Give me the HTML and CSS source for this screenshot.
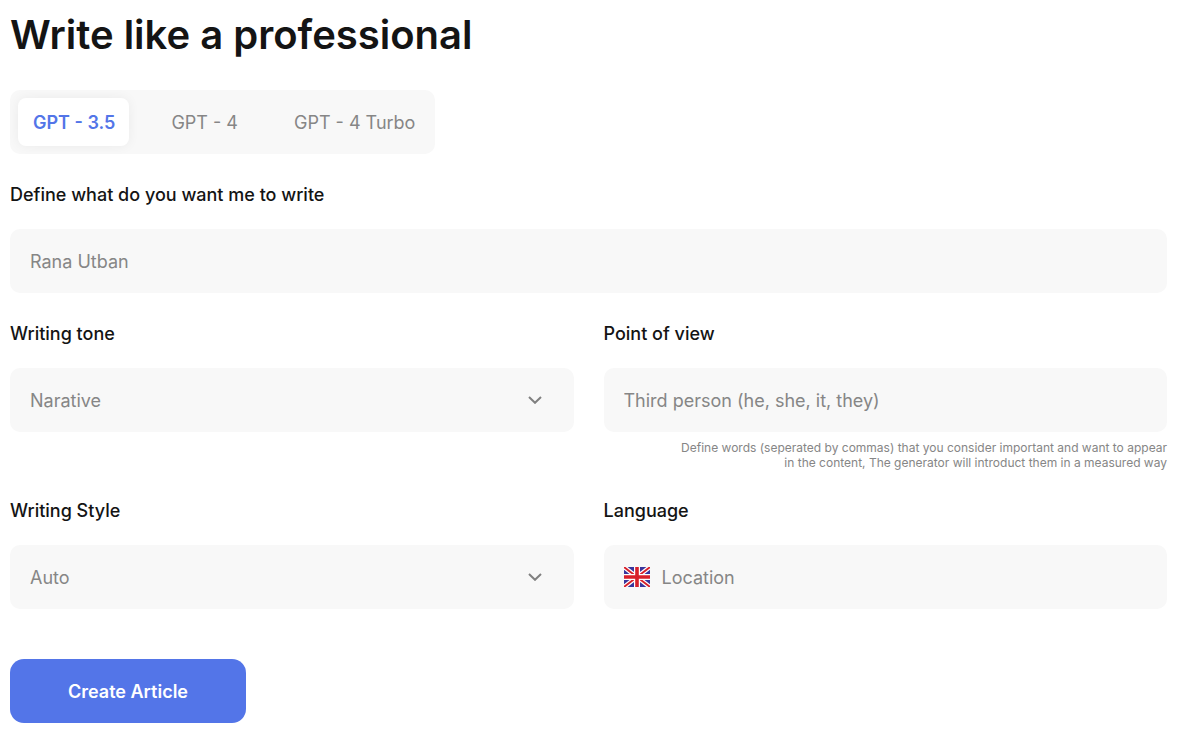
FILE: index.html
```html
<!DOCTYPE html>
<html lang="en">
<head>
<meta charset="utf-8">
<meta name="viewport" content="width=device-width, initial-scale=1">
<title>Write like a professional</title>
<link rel="stylesheet" href="styles.css">
</head>
<body>
<main class="page">
  <h1 class="title">Write like a professional</h1>
  <div class="tabs" role="tablist">
    <button class="tab tab-active" type="button" role="tab" aria-selected="true">GPT - 3.5</button>
    <button class="tab" type="button" role="tab" aria-selected="false">GPT - 4</button>
    <button class="tab" type="button" role="tab" aria-selected="false">GPT - 4 Turbo</button>
  </div>
  <form class="form">
    <div class="field field-wide">
      <label class="label" for="topic">Define what do you want me to write</label>
      <div class="control"><input class="input" id="topic" type="text" placeholder="Rana Utban"></div>
    </div>
    <div class="field">
      <label class="label" for="tone">Writing tone</label>
      <div class="control">
        <select class="input select" id="tone"><option>Narative</option></select>
        <svg class="chevron" viewBox="0 0 14 8" aria-hidden="true"><path d="M1 1l6 5.8L13 1"/></svg>
      </div>
    </div>
    <div class="field">
      <label class="label" for="view">Point of view</label>
      <div class="control"><input class="input" id="view" type="text" placeholder="Third person (he, she, it, they)"></div>
      <p class="hint">Define words (seperated by commas) that you consider important and want to appear in the content, The generator will introduct them in a measured way</p>
    </div>
    <div class="field">
      <label class="label" for="style">Writing Style</label>
      <div class="control">
        <select class="input select" id="style"><option>Auto</option></select>
        <svg class="chevron" viewBox="0 0 14 8" aria-hidden="true"><path d="M1 1l6 5.8L13 1"/></svg>
      </div>
    </div>
    <div class="field">
      <label class="label" for="language">Language</label>
      <div class="control">
        <svg class="flag" viewBox="0 0 26 20" aria-hidden="true">
          <path fill="#39359c" d="M0 0h26v20H0z"/>
          <path stroke="#fff" stroke-width="4.4" d="m0 0 26 20M26 0 0 20"/>
          <path stroke="#d8202a" stroke-width="1.8" d="m0 0 26 20M26 0 0 20"/>
          <path stroke="#fff" stroke-width="6" d="M13 0v20M0 10h26"/>
          <path stroke="#d8202a" stroke-width="3.6" d="M13 0v20M0 10h26"/>
        </svg>
        <input class="input" id="language" type="text" placeholder="Location">
      </div>
    </div>
    <button class="submit" type="button">Create Article</button>
  </form>
</main>
</body>
</html>
```

FILE: styles.css
```css
* { box-sizing: border-box; }
body { margin: 0; background: #fff; color: #141414; font-family: Inter, "Liberation Sans", sans-serif; font-size: 18px; }
.page { padding: 10px 23px 16px 10px; }
.title { margin: 0 0 30px; font-size: 40px; line-height: 50px; font-weight: 600; }
.tabs { display: inline-flex; gap: 27px; padding: 8px 6px 8px 8px; border-radius: 10px; background: #f8f8f8; }
.tab { height: 48px; padding: 1px 14px 0 15px; border: 0; border-radius: 8px; background: none; color: #868686; font: 400 18px/25px Inter, "Liberation Sans", sans-serif; }
.tab-active { background: #fff; color: #5375e8; font-weight: 600; box-shadow: 0 0 12px rgba(0, 0, 0, 0.06); }
.form { display: grid; grid-template-columns: 1fr 1fr; gap: 29px 30px; margin-top: 29px; }
.field-wide { grid-column: 1 / -1; }
.label { display: block; margin-bottom: 22px; line-height: 24px; font-weight: 500; }
.control { display: flex; align-items: center; gap: 12px; height: 64px; padding: 0 20px; border-radius: 10px; background: #f8f8f8; }
.input { flex: 1; min-width: 0; height: 100%; padding: 0; border: 0; outline: 0; appearance: none; background: none; color: #868686; font: 400 18px/24px Inter, "Liberation Sans", sans-serif; }
.input::placeholder { color: #868686; opacity: 1; }
.select { padding-top: 2px; }
.chevron { width: 14px; height: 8px; margin-right: 12px; fill: none; stroke: #808080; stroke-width: 2; }
.flag { width: 26px; height: 20px; }
.hint { max-width: 490px; margin: 8px 0 0 auto; color: #868686; font-size: 12px; line-height: 15px; text-align: right; }
.submit { justify-self: start; width: 236px; height: 64px; margin-top: 21px; padding: 2px 0 0; border: 0; border-radius: 14px; background: #5375e8; color: #fff; font: 600 18px/24px Inter, "Liberation Sans", sans-serif; }
```
